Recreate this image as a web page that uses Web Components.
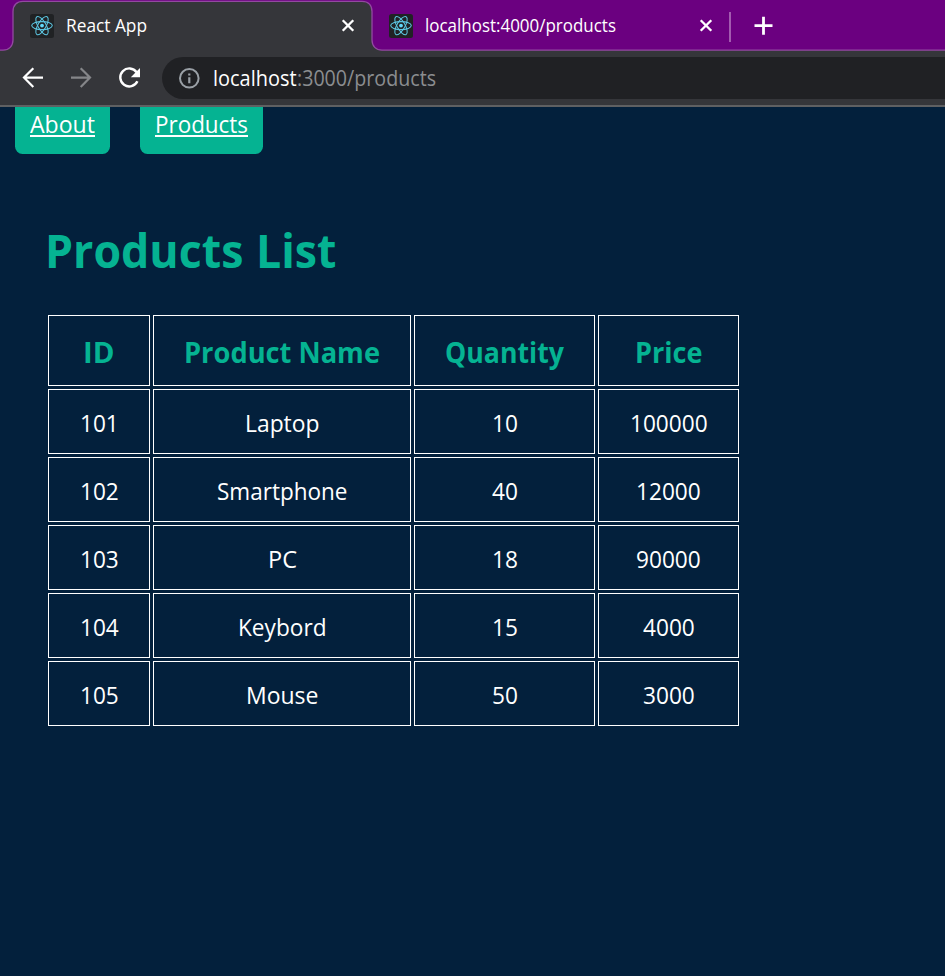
<!DOCTYPE html>
<html lang="en">
<head>
<meta charset="utf-8">
<title>React App</title>
<style>
html,body{margin:0;height:100%;background:#03203c;overflow:hidden}
body{font-family:"Open Sans","Noto Sans",sans-serif;color:#fff}
</style>
</head>
<body>
<browser-window></browser-window>
<script>
const define = (name, html, init) => customElements.define(name, class extends HTMLElement {
  connectedCallback() {
    if (this.shadowRoot) return;
    this.attachShadow({mode: 'open'}).innerHTML = html(this);
    if (init) init(this);
  }
});

// A single line of text, condensed or widened to the advance width in "w".
define('fit-text', e => `<style>
:host{display:inline-block;width:${e.getAttribute('w')}px;white-space:nowrap;text-align:left;flex:none}
span{display:inline-block;transform-origin:0 50%}
</style><span>${e.getAttribute('text')}</span>`, e => {
  const s = e.shadowRoot.querySelector('span');
  s.style.transform = `scaleX(${+e.getAttribute('w') / s.getBoundingClientRect().width})`;
});

define('react-icon', () => `<style>:host{display:block;width:24px;height:24px;flex:none}svg{display:block}</style>
<svg width="24" height="24" viewBox="0 0 24 24"><rect width="24" height="24" rx="2.5" fill="#202224"/>
<g transform="translate(12 11.6)" fill="none" stroke="#5cc6e2" stroke-width="1.05">
<ellipse rx="10.3" ry="4"/><ellipse rx="10.3" ry="4" transform="rotate(60)"/><ellipse rx="10.3" ry="4" transform="rotate(120)"/>
<circle r="1.9" fill="#61dafb" stroke="none"/></g></svg>`);

define('close-icon', () => `<style>:host{display:block;width:14px;height:14px;flex:none}svg{display:block}</style>
<svg width="14" height="14"><path d="M1.7 1.2L12.3 11.8M12.3 1.2L1.7 11.8" stroke="#fff" stroke-width="2.3"/></svg>`);

define('browser-tab', e => `<style>
:host{display:flex;align-items:center;box-sizing:border-box;height:51px;flex:none;padding-right:17px;font-size:17.5px;line-height:30px}
react-icon{margin-right:12px;margin-top:1px}
fit-text{margin-bottom:2px}
close-icon{margin-left:auto}
</style><react-icon></react-icon><fit-text w="${e.getAttribute('w')}" text="${e.getAttribute('text')}"></fit-text><close-icon></close-icon>`);

define('tab-strip', () => `<style>
:host{display:grid;height:51px;background:#6b0080}
svg,div{grid-area:1/1}
svg{display:block}
div{display:flex;align-items:center;padding-left:30px}
browser-tab:nth-child(1){width:342px}
browser-tab:nth-child(2){width:341.4px;margin-left:17px}
i{width:1.5px;height:30px;background:#a35bb0;margin-left:-1.4px;margin-top:2px}
b{display:block;width:20px;height:20px;margin-left:23px}
</style>
<svg width="945" height="51"><path d="M-2 50.2H3C9 50.2 13 46 13 40V11.5C13 5 17 1.3 23 1.3H362C368 1.3 372 5 372 11.5V40C372 46 376 50.2 382 50.2H947V53H-2Z" fill="#35363a" stroke="#924aa0" stroke-width="1.3"/></svg>
<div><browser-tab w="81" text="React App"></browser-tab><browser-tab w="191" text="localhost:4000/products"></browser-tab><i></i>
<b><svg width="20" height="20"><path d="M.5 9.7H18.5M9.5 .7V18.7" stroke="#fff" stroke-width="2.8"/></svg></b></div>`);

define('tool-bar', () => `<style>
:host{display:flex;height:56px;box-sizing:border-box;background:#35363a;border-bottom:2px solid #5f6062}
.nav{display:block;width:162px;height:54px;flex:none}
.box{display:flex;align-items:center;flex:1;height:42px;margin-top:6px;border-radius:21px 0 0 21px;background:#202124;padding-left:16px;font-size:21px;line-height:36px}
.info{display:block;width:22px;height:22px;margin-right:13px}
.dim{color:#8b8d90}
</style>
<svg class="nav" viewBox="0 51 162 54" fill="none" stroke="#fff" stroke-width="2.2">
<path d="M43 77.6H24.5M33.3 68.2L24 77.6L33.3 87"/>
<path d="M71 77.6H89.5M80.7 68.2L90 77.6L80.7 87" stroke="#858689"/>
<path d="M136.6 72.2A9 9 0 1 0 137.4 81.3" stroke-width="2.4"/><path d="M140 68V77.3H130.8Z" fill="#fff" stroke="none"/></svg>
<div class="box"><svg class="info" viewBox="0 0 22 22" fill="none" stroke="#9aa0a6" stroke-width="2"><circle cx="11.3" cy="11.3" r="9.3"/><path d="M11.3 10.2V16.2M11.3 6.4V8.6" stroke-width="2.2"/></svg>
<fit-text w="83.5" text="localhost"></fit-text><fit-text class="dim" w="139" text=":3000/products"></fit-text></div>`);

define('nav-link', () => `<style>
:host{display:block;box-sizing:border-box;height:47px;padding:0 15px;background:#05b392;border-radius:0 0 7.5px 7.5px;font-size:23.8px;line-height:34px}
</style><slot></slot>`);

define('table-cell', () => `<style>
:host{display:flex;justify-content:center;align-items:center;box-sizing:border-box;border:1px solid #fff;height:65px;padding-top:3px;font-size:23.6px;line-height:32px}
:host([head]){height:71px;padding-top:2px;font-size:29.3px;font-weight:700;color:#05b392;line-height:40px}
</style><slot></slot>`);

const rows = [
  [['ID', 31.5], ['Product Name', 196], ['Quantity', 119], ['Price', 67.5]],
  [['101', 38.8], ['Laptop', 74.5], ['10', 25.9], ['100000', 77.6]],
  [['102', 38.8], ['Smartphone', 130.5], ['40', 25.9], ['12000', 64.7]],
  [['103', 38.8], ['PC', 29], ['18', 25.9], ['90000', 64.7]],
  [['104', 38.8], ['Keybord', 88.5], ['15', 25.9], ['4000', 51.8]],
  [['105', 38.8], ['Mouse', 72.5], ['50', 25.9], ['3000', 51.8]]
];

define('product-table', () => `<style>
:host{display:grid;grid-template-columns:102px 258px 181px 141px;gap:3px;justify-content:start}
</style>${rows.map((r, i) => r.map(([t, w]) => `<table-cell${i ? '' : ' head'}><fit-text w="${w}" text="${t}"></fit-text></table-cell>`).join('')).join('')}`);

define('products-page', () => `<style>
:host{display:block}
nav{display:flex;gap:30px;padding-left:15px}
h1{margin:64px 0 0 45px;height:64px;font-size:47px;line-height:64px;font-weight:700;color:#05b392;word-spacing:1px}
product-table{margin:33px 0 0 48px}
</style>
<nav><nav-link><fit-text w="65" text="<u>About</u>"></fit-text></nav-link><nav-link><fit-text w="93" text="<u>Products</u>"></fit-text></nav-link></nav>
<h1><fit-text w="291.5" text="Products List"></fit-text></h1>
<product-table></product-table>`);

define('browser-window', () => `<style>:host{display:flex;flex-direction:column;height:976px}products-page{flex:1}</style>
<tab-strip></tab-strip><tool-bar></tool-bar><products-page></products-page>`);
</script>
</body>
</html>
